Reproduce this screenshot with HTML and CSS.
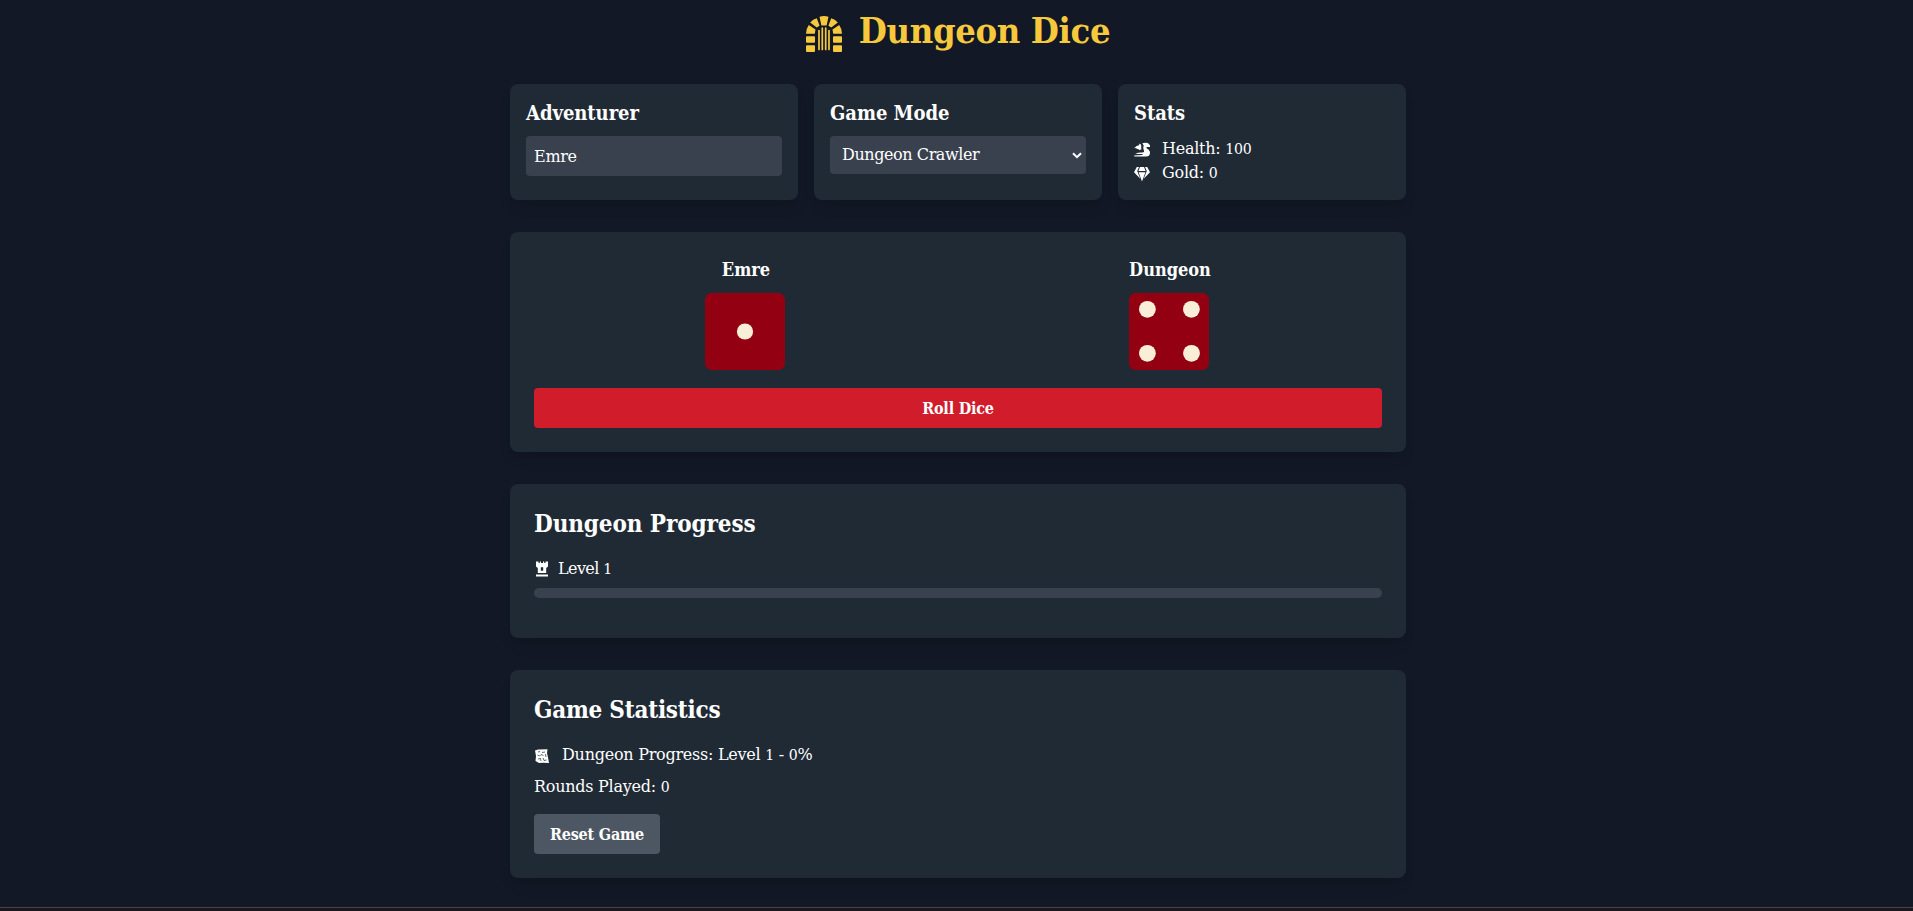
FILE: index.html
```html
<!DOCTYPE html>
<html lang="en">
<head>
<meta charset="utf-8">
<title>Dungeon Dice</title>
<link rel="stylesheet" href="styles.css">
</head>
<body>
<main class="container">
  <h1 class="title">
    <svg class="title-icon" viewBox="0 0 36 36" fill="currentColor"><path d="M13.500 0.800Q18 -0.600 22.500 0.800L20.600 9.500H15.400ZM10.800 2.200L13.600 9.800L10.700 11.600L4.200 6.500Q7 3.300 10.800 2.200ZM25.200 2.200L22.400 9.800L25.300 11.600L31.800 6.500Q29 3.300 25.200 2.200ZM2.800 9L9.500 13.600L8.800 17.800H0Q0 12.800 2.800 9ZM33.200 9L26.500 13.600L27.200 17.800H36Q36 12.800 33.200 9ZM1 20.300H8Q9 20.300 9 21.300V25.700Q9 26.700 8 26.700H1Q0 26.700 0 25.700V21.300Q0 20.300 1 20.300ZM28 20.300H35Q36 20.300 36 21.300V25.700Q36 26.700 35 26.700H28Q27 26.700 27 25.700V21.300Q27 20.300 28 20.300ZM1 29.300H8Q9 29.300 9 30.300V35Q9 36 8 36H1Q0 36 0 35V30.300Q0 29.300 1 29.300ZM28 29.300H35Q36 29.300 36 30.300V35Q36 36 35 36H28Q27 36 27 35V30.300Q27 29.300 28 29.300Z"/><path d="M13 14.500V33.500M16.300 12V33.500M19.700 12V33.500M23 14.500V33.500" fill="none" stroke="currentColor" stroke-width="1.700" stroke-linecap="round"/></svg>
    <span>Dungeon Dice</span>
  </h1>

  <section class="top">
    <div class="card small">
      <h2 class="label">Adventurer</h2>
      <input class="field" type="text" value="Emre">
    </div>
    <div class="card small">
      <h2 class="label">Game Mode</h2>
      <div class="select"><span>Dungeon Crawler</span>
        <svg class="chevron" viewBox="0 0 10 7"><path d="M1 1.200L5 5.200L9 1.200" fill="none" stroke="currentColor" stroke-width="2"/></svg>
      </div>
    </div>
    <div class="card small">
      <h2 class="label stats-label">Stats</h2>
      <p class="stat"><svg class="icon16" viewBox="0 0 16 16" fill="currentColor"><path d="M0 6.300Q2.500 3.500 5.600 3L4.800 1.900Q7 1.500 7.300 3.800L7.200 8Q6.300 7 5.300 8.200Q4.500 6.500 3 7Q2 5.600 0 6.300ZM8.300 1.300Q10.500 .5 13.800 1L16 3.300V5H12.800Q12 5.700 12.800 6.500Q16 8 16 11Q15.800 14.500 12 14.500H1Q0 14.500 0 13.600Q3.500 13.200 8.500 12.900V12.100Q3.500 12 1.200 11.500Q4.500 10.400 8.500 10.600Q10.800 10.200 10 8.700Q8.400 6.500 9.700 3.500Z"/></svg><span>Health: <span class="num">100</span></span></p>
      <p class="stat"><svg class="icon16" viewBox="0 0 16 16" fill="currentColor"><path d="M2.800 1H5L3.200 5L6.300 12.800L0 6.200ZM13.200 1H11L12.800 5L9.700 12.800L16 6.200ZM6 1H10L11.600 5H4.400ZM4.600 6.200H11.400L8 15.500Z"/></svg><span>Gold: <span class="num">0</span></span></p>
    </div>
  </section>

  <section class="card large">
    <div class="players">
      <div class="player">
        <h3 class="name">Emre</h3>
        <svg class="die" viewBox="0 0 80 77"><rect class="face" width="80" height="77" rx="6.500"/><circle class="pip" cx="40" cy="38.500" r="8.100"/></svg>
      </div>
      <div class="player">
        <h3 class="name">Dungeon</h3>
        <svg class="die" viewBox="0 0 80 77"><rect class="face" width="80" height="77" rx="6.500"/><g class="pip"><circle cx="18.400" cy="16.300" r="8.400"/><circle cx="62.400" cy="16.300" r="8.400"/><circle cx="18.400" cy="60.300" r="8.400"/><circle cx="62.500" cy="60.300" r="8.400"/></g></svg>
      </div>
    </div>
    <button class="btn roll">Roll Dice</button>
  </section>

  <section class="card large">
    <h2 class="heading">Dungeon Progress</h2>
    <p class="level"><svg class="icon16 rook" viewBox="0 0 16 16" fill="currentColor"><path fill-rule="evenodd" d="M2 .5H4.500V2H5.800V.5H7V2H9V.5H10.200V2H11.500V.5H14V5.500L12.200 7V12H3.800V7L2 5.500ZM6.800 6.500V9.700H9.200V6.500Q8 5.300 6.800 6.500ZM2 13.400H14V15.600H2Z"/></svg><span>Level <span class="num">1</span></span></p>
    <div class="bar"></div>
  </section>

  <section class="card large">
    <h2 class="heading statistics">Game Statistics</h2>
    <p class="line"><svg class="icon16" viewBox="0 0 16 16"><path d="M1 2.500L4 1.500L13.500 1.200L13 5L13.800 8.500L15 15L9 14.800L5 15L1.500 13L2 8Z" fill="currentColor"/><path class="ink" d="M4 4L6 3.500M8 4.500L11 4M3.500 7L5.500 8L7 6.500L9.500 7.500M11.500 6L12 9M4 11L6.500 10.500L7 13M9 10L10 12.500L12.500 12"/></svg><span>Dungeon Progress: Level <span class="num">1</span> - <span class="num">0</span>%</span></p>
    <p class="line"><span>Rounds Played: <span class="num">0</span></span></p>
    <button class="btn reset">Reset Game</button>
  </section>
</main>
<footer class="footer"></footer>
</body>
</html>
```
FILE: styles.css
```css
* { box-sizing: border-box; }

body {
  margin: 0;
  height: 911px;
  overflow: hidden;
  padding-left: 3px;
  display: flex;
  flex-direction: column;
  background: #121825;
  color: #fff;
  font: 16px/24px "DejaVu Serif", serif;
  letter-spacing: -.25px;
}

h1, h2, h3, p { margin: 0; }
h1, h2, h3, .btn { font-family: "DejaVu Serif Condensed", "DejaVu Serif", serif; font-stretch: condensed; font-weight: bold; }
.container { width: 896px; margin: 0 auto; display: flex; flex-direction: column; gap: 32px; }
.title {
  height: 52px;
  padding-top: 10px;
  display: flex;
  justify-content: center;
  gap: 17px;
  color: #f6c93d;
  font-size: 36px;
  line-height: 40px;
  letter-spacing: -.35px;
}
.title-icon { width: 36px; height: 36px; margin-top: 6px; }
.top { display: grid; grid-template-columns: repeat(3, 1fr); gap: 16px; }
.card { border-radius: 8px; background: #202a35; box-shadow: 0 10px 15px -3px rgba(0, 0, 0, .08), 0 4px 6px -2px rgba(0, 0, 0, .05); }
.small { height: 116px; padding: 15px 16px 16px; }
.large { padding: 24px; }
.label { margin-bottom: 9px; font-size: 20px; line-height: 28px; letter-spacing: -.04px; }
.stats-label { margin-bottom: 10px; }
.field {
  display: block;
  width: 100%;
  height: 40px;
  padding: 8px;
  border: 0;
  border-radius: 4px;
  background: #39414f;
  color: #fff;
  font: inherit;
  letter-spacing: -.3px;
}
.select {
  display: flex;
  justify-content: space-between;
  align-items: center;
  height: 38px;
  padding: 0 4px 0 12px;
  border-radius: 4px;
  background: #39414f;
  letter-spacing: -.42px;
}
.chevron { width: 10px; height: 7px; }
.icon16 { width: 16px; height: 16px; margin-top: 2px; flex: none; }
.rook { margin-top: 0; }
.stat { display: flex; gap: 12px; align-items: center; height: 24px; }
.num { font-size: .88em; line-height: 1; }
.players { display: flex; justify-content: space-around; height: 132px; }
.player { width: 424px; display: flex; flex-direction: column; align-items: center; }
.name { margin-bottom: 9.4px; font-size: 18px; line-height: 28px; letter-spacing: 0; }
.die { width: 80px; height: 77px; margin-right: 2px; }
.face { fill: #930012; }
.pip { fill: #f9efd9; }
.btn {
  display: block;
  height: 40px;
  padding: 1px 0 0;
  border: 0;
  border-radius: 4px;
  color: #fff;
  font-size: 16px;
  line-height: 24px;
  letter-spacing: -.2px;
}
.roll { width: 100%; background: #d11c2c; }
.heading { margin-bottom: 16px; font-size: 24px; line-height: 32px; letter-spacing: -.1px; }
.statistics { letter-spacing: -.24px; }
.level { display: flex; gap: 8px; align-items: center; height: 24px; padding-top: 1px; margin-bottom: 8px; letter-spacing: -.6px; }
.bar { height: 10px; margin-bottom: 16px; border-radius: 5px; background: #39414f; }
.line { display: flex; gap: 12px; align-items: center; height: 24px; padding-top: 1px; margin-bottom: 8px; }
.reset { width: 126px; margin-top: 16px; background: #4d5763; }
.ink { fill: none; stroke: #202a35; stroke-width: .7; }
.footer { height: 4px; margin: auto 0 0 -3px; border-top: 1px solid #444; background: #1b171a; }
```
